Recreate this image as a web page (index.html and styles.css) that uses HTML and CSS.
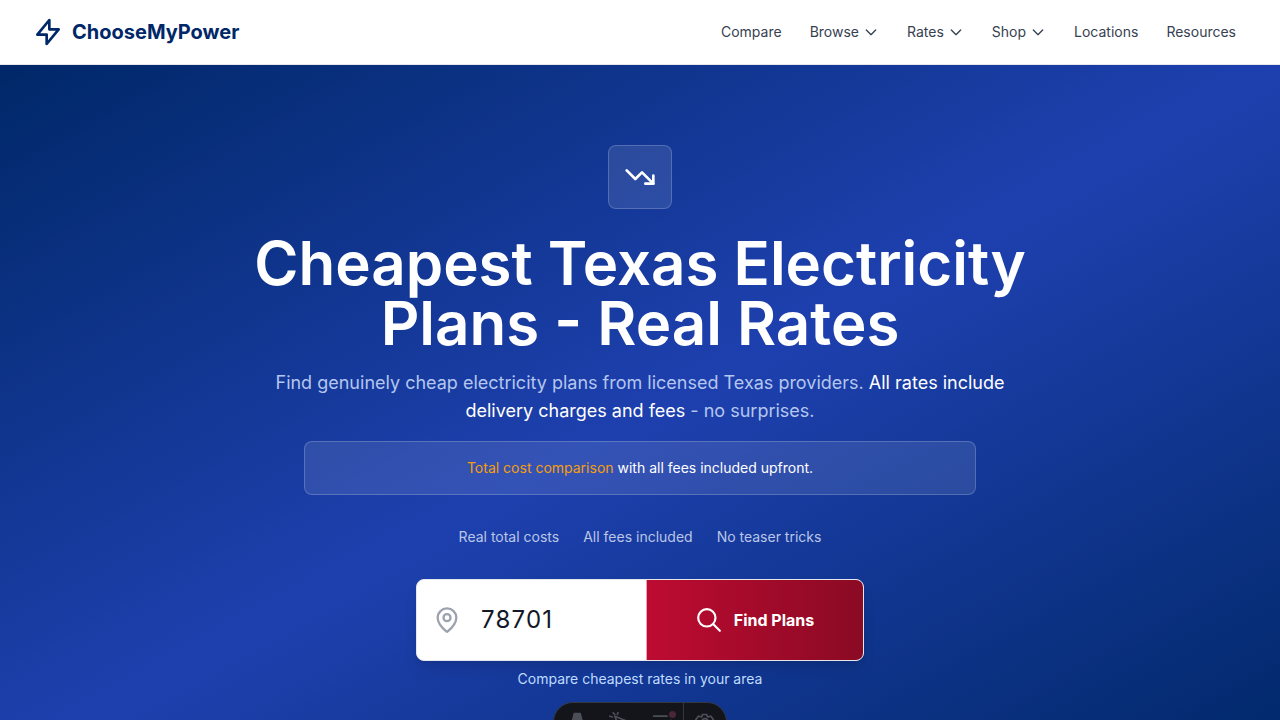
FILE: index.html
```html
<!DOCTYPE html>
<html lang="en">
<head>
<meta charset="utf-8">
<meta name="viewport" content="width=device-width, initial-scale=1">
<title>Cheapest Texas Electricity Plans - ChooseMyPower</title>
<link rel="stylesheet" href="styles.css">
</head>
<body>
<header class="site-header">
  <a class="brand" href="#">
    <svg class="brand-icon" viewBox="0 0 24 24" aria-hidden="true"><path d="M13 10V3L4 14h7v7l9-11h-7z"/></svg>
    <span>ChooseMyPower</span>
  </a>
  <nav class="main-nav" aria-label="Main">
    <a class="nav-item" href="#">Compare</a>
    <button class="nav-item" type="button">Browse <svg class="chevron" viewBox="0 0 24 24" aria-hidden="true"><path d="m5 9 7 7 7-7"/></svg></button>
    <button class="nav-item" type="button">Rates <svg class="chevron" viewBox="0 0 24 24" aria-hidden="true"><path d="m5 9 7 7 7-7"/></svg></button>
    <button class="nav-item" type="button">Shop <svg class="chevron" viewBox="0 0 24 24" aria-hidden="true"><path d="m5 9 7 7 7-7"/></svg></button>
    <a class="nav-item" href="#">Locations</a>
    <a class="nav-item" href="#">Resources</a>
  </nav>
</header>
<main class="hero">
  <div class="hero-badge">
    <svg class="trend-icon" viewBox="0 0 24 24" aria-hidden="true"><path d="m22 17-8.500-8.500-5 5L2 7"/><path d="M16 17h6v-6"/></svg>
  </div>
  <h1 class="hero-title">Cheapest Texas Electricity Plans - Real Rates</h1>
  <p class="hero-lead">Find genuinely cheap electricity plans from licensed Texas providers. <strong>All rates include delivery charges and fees</strong> - no surprises.</p>
  <p class="hero-note"><span class="accent">Total cost comparison</span> with all fees included upfront.</p>
  <ul class="hero-points">
    <li>Real total costs</li>
    <li>All fees included</li>
    <li>No teaser tricks</li>
  </ul>
  <form class="zip-form">
    <label class="zip-field">
      <svg class="pin-icon" viewBox="0 0 24 24" role="img" aria-label="ZIP code"><path d="M20 10c0 4.990-5.540 10.190-7.400 11.800a1 1 0 0 1-1.200 0C9.540 20.190 4 14.990 4 10a8 8 0 0 1 16 0"/><circle cx="12" cy="10" r="3"/></svg>
      <input class="zip-input" type="text" inputmode="numeric" maxlength="5" value="78701">
    </label>
    <button class="zip-submit" type="submit">
      <svg class="search-icon" viewBox="0 0 24 24" aria-hidden="true"><circle cx="10" cy="10" r="8"/><path d="m16 16 6 6"/></svg>
      Find Plans
    </button>
  </form>
  <p class="form-hint">Compare cheapest rates in your area</p>
</main>
<div class="dev-toolbar">
  <button class="tool" type="button" aria-label="Menu"><svg viewBox="0 0 24 24"><path class="solid" d="M10 2h7l5 19-5-2-3.500-11-3.500 11-5 2z"/></svg></button>
  <button class="tool" type="button" aria-label="Inspect"><svg viewBox="0 0 24 24"><path d="M7 5l15 6-6 3-3 7zM1 5l3 1M5 1l2 2M11 0l-1 3"/></svg></button>
  <button class="tool" type="button" aria-label="Audit"><svg viewBox="0 0 24 24"><path d="M2 5h16M2 13h8M14 13l4 4 5-7"/></svg><span class="tool-alert"></span></button>
  <button class="tool tool-settings" type="button" aria-label="Settings"><svg viewBox="0 0 24 24"><path d="M9 3h5l1 3 4-1 3 4-2 3 2 3-3 4-4-1-1 3h-5l-1-3-4 1-3-4 2-3-2-3 3-4 4 1z"/><circle cx="12" cy="12" r="4"/></svg></button>
</div>
</body>
</html>
```
FILE: styles.css
```css
*, *::before, *::after { box-sizing: border-box; }

body {
  margin: 0;
  font-family: Inter, "Liberation Sans", sans-serif;
  color: #fff;
  -webkit-font-smoothing: antialiased;
}

svg { fill: none; stroke: currentColor; stroke-linecap: round; stroke-linejoin: round; flex: none; }
h1, p, ul { margin: 0; padding: 0; }
button, input { font: inherit; }

.site-header {
  display: flex;
  align-items: center;
  justify-content: space-between;
  height: 65px;
  padding: 0 32px;
  background: #fff;
  border-bottom: 1px solid #e5e7eb;
}

.brand {
  display: flex;
  align-items: center;
  gap: 8px;
  color: #002768;
  font-size: 20px;
  font-weight: 700;
  text-decoration: none;
}

.brand-icon { width: 32px; height: 32px; stroke-width: 2; }

.main-nav { display: flex; align-items: center; gap: 4px; }

.nav-item {
  display: flex;
  align-items: center;
  gap: 4px;
  padding: 8px 12px;
  border: 0;
  background: none;
  color: #374151;
  font-size: 14px;
  line-height: 20px;
  text-decoration: none;
}

.chevron { width: 16px; height: 16px; stroke-width: 2; }

.hero {
  display: flex;
  flex-direction: column;
  align-items: center;
  padding: 80px 32px;
  background: linear-gradient(to bottom right, #002868, #1e40af 50%, #002868);
  text-align: center;
}

.hero-badge {
  display: grid;
  place-items: center;
  width: 64px;
  height: 64px;
  margin-bottom: 24px;
  border: 1px solid rgba(255, 255, 255, 0.2);
  border-radius: 8px;
  background: rgba(255, 255, 255, 0.1);
}

.trend-icon { width: 32px; height: 32px; stroke-width: 2; }

.hero-title {
  max-width: 896px;
  font-size: 60px;
  line-height: 60px;
  font-weight: 600;
}

.hero-lead {
  max-width: 768px;
  margin-top: 16px;
  color: #b4c6ee;
  font-size: 18px;
  line-height: 28px;
}

.hero-lead strong { color: #fff; font-weight: 400; }

.hero-note {
  width: 100%;
  max-width: 672px;
  margin-top: 16px;
  padding: 16px;
  border: 1px solid rgba(255, 255, 255, 0.2);
  border-radius: 8px;
  background: rgba(255, 255, 255, 0.1);
  font-size: 14px;
  line-height: 20px;
}

.accent { color: #f59e0b; }

.hero-points {
  display: flex;
  gap: 24px;
  margin-top: 32px;
  color: #bac6e7;
  font-size: 14px;
  line-height: 20px;
  list-style: none;
}

.zip-form {
  display: flex;
  width: 100%;
  max-width: 448px;
  height: 82px;
  margin-top: 32px;
  overflow: hidden;
  border: 1px solid #e5e7eb;
  border-radius: 8px;
  background: #fff;
  box-shadow: 0 10px 15px -3px rgba(0, 0, 0, 0.1), 0 4px 6px -4px rgba(0, 0, 0, 0.1);
}

.zip-field {
  display: flex;
  align-items: center;
  gap: 20px;
  flex: 1;
  min-width: 0;
  padding-left: 16px;
}

.pin-icon { width: 28px; height: 28px; color: #9ca3af; stroke-width: 2; }

.zip-input {
  width: 100%;
  min-width: 0;
  padding: 0;
  border: 0;
  outline: 0;
  background: none;
  color: #111827;
  font-size: 24px;
  line-height: 32px;
  letter-spacing: 0.05em;
}

.zip-submit {
  display: flex;
  align-items: center;
  justify-content: center;
  gap: 12px;
  width: 217px;
  border: 0;
  border-left: 1px solid #e5a3b1;
  background: linear-gradient(to right, #be0b31, #8a0a24);
  color: #fff;
  font-size: 16px;
  font-weight: 700;
}

.search-icon { width: 26px; height: 26px; stroke-width: 2; }

.form-hint {
  margin-top: 8px;
  color: #bfdbfe;
  font-size: 14px;
  line-height: 20px;
}

.dev-toolbar {
  position: fixed;
  bottom: -22px;
  left: 50%;
  display: flex;
  height: 40px;
  overflow: hidden;
  transform: translateX(-50%);
  border: 1px solid #343841;
  border-radius: 20px;
  background: #13151a;
}

.tool {
  position: relative;
  display: grid;
  place-items: center;
  width: 43px;
  padding: 0;
  border: 0;
  background: none;
  color: #4c4f58;
}

.tool svg { width: 20px; height: 20px; stroke-width: 2; }
.tool .solid { fill: currentColor; }
.tool-settings { border-left: 1px solid #343841; }

.tool-alert {
  position: absolute;
  top: 8px;
  right: 7px;
  width: 7px;
  height: 7px;
  border-radius: 50%;
  background: #4b2637;
}
```
